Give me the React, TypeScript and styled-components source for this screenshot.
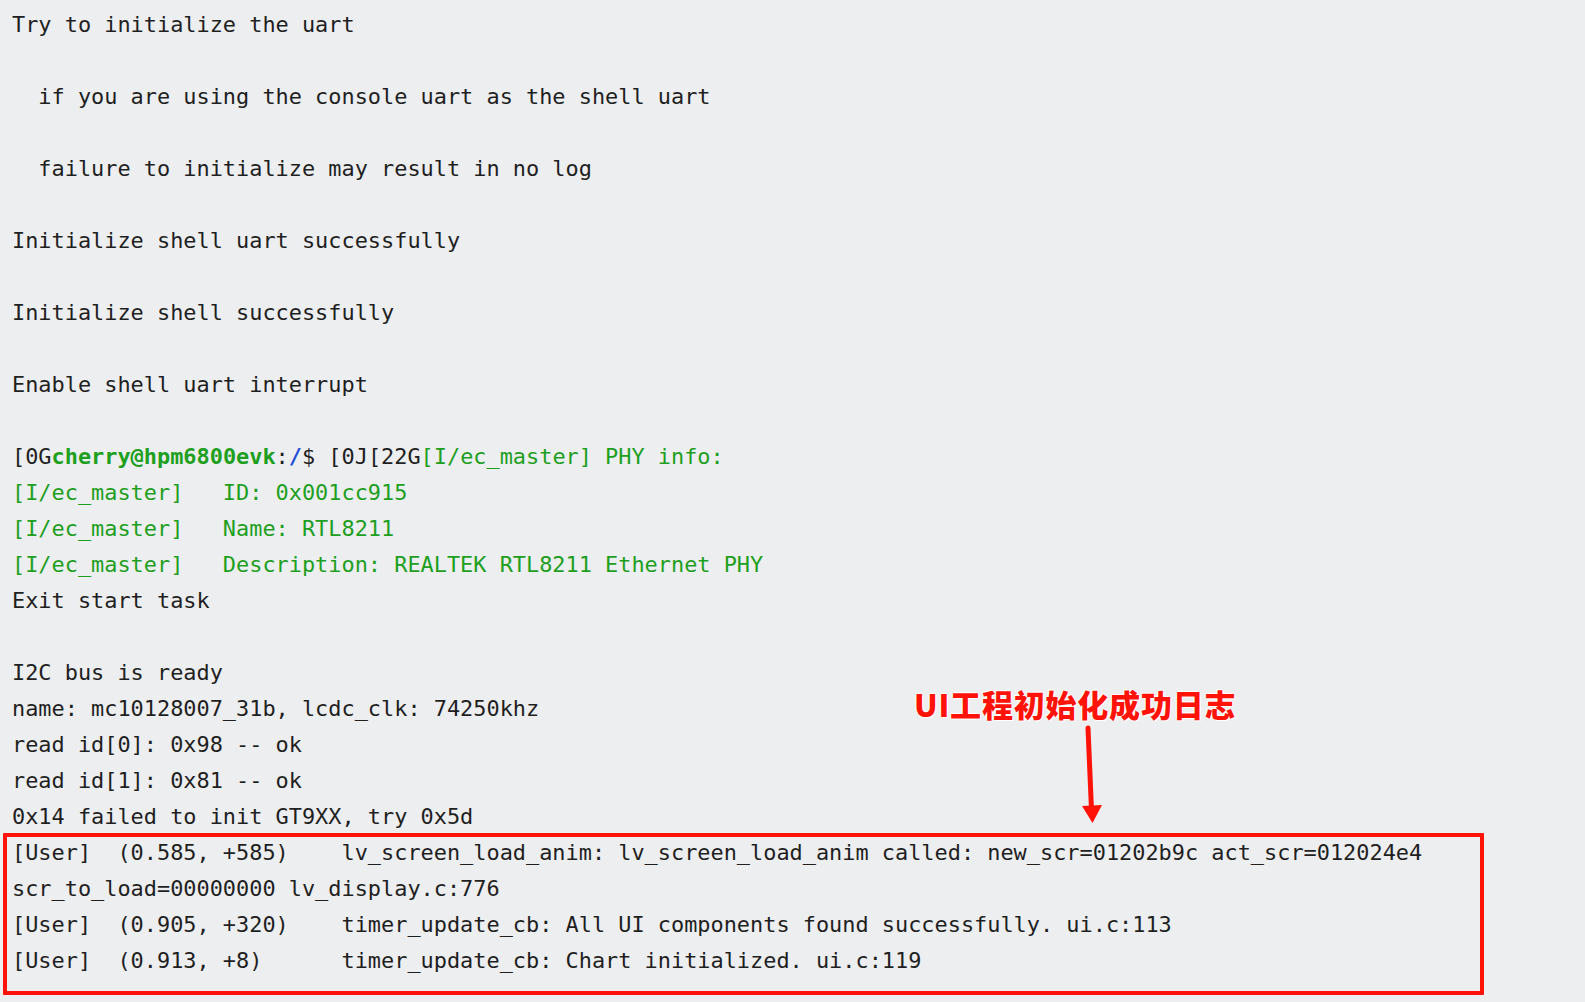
import React from "react";
import styled, { createGlobalStyle } from "styled-components";

const GlobalStyle = createGlobalStyle`
  html, body {
    margin: 0;
    padding: 0;
    background: #edeef0;
  }
  body {
    width: 1585px;
    height: 1002px;
    overflow: hidden;
  }
`;

const Page = styled.div`
  position: relative;
  box-sizing: border-box;
  width: 1585px;
  height: 1002px;
  padding: 7px 0 0 12px;
  background: #edeef0;
  font-family: "DejaVu Sans Mono", "Liberation Mono", monospace;
  font-size: 21.9px;
  color: #1f1f1f;
`;

const Line = styled.div`
  height: 36px;
  line-height: 36px;
  white-space: pre;
`;

const Green = styled.span<{ $bold?: boolean }>`
  color: #1e9f1e;
  font-weight: ${(p) => (p.$bold ? 700 : 400)};
`;

const Blue = styled.span`
  color: #1f4fd8;
  font-weight: 700;
`;

const Highlight = styled.div`
  position: relative;
  &::after {
    content: "";
    position: absolute;
    top: -2px;
    left: -9px;
    width: 1481px;
    height: 162px;
    box-sizing: border-box;
    border: 4.5px solid #ff1208;
    border-radius: 1px;
    pointer-events: none;
  }
`;

const Note = styled.div`
  position: absolute;
  left: 914px;
  top: 684px;
  font-family: "Noto Sans CJK SC", "Noto Sans", sans-serif;
  font-weight: 900;
  font-size: 31px;
  line-height: 40px;
  letter-spacing: 0.8px;
  color: #ff1208;
  white-space: nowrap;
  text-shadow: 0 0 2px #ffffff, 0 0 2px #ffffff, 1px 1px 0 #ffffff,
    -1px -1px 0 #ffffff;
`;

const ArrowSvg = styled.svg`
  position: absolute;
  left: 1076px;
  top: 720px;
`;

const Arrow = () => (
  <ArrowSvg width="30" height="106" viewBox="0 0 30 106">
    <line x1="12" y1="8" x2="15.5" y2="90" stroke="#ff1208" strokeWidth="5" strokeLinecap="round" />
    <polygon points="6,86 26,85 16.5,103" fill="#ff1208" />
  </ArrowSvg>
);

const top: string[] = [
  "Try to initialize the uart",
  "",
  "  if you are using the console uart as the shell uart",
  "",
  "  failure to initialize may result in no log",
  "",
  "Initialize shell uart successfully",
  "",
  "Initialize shell successfully",
  "",
  "Enable shell uart interrupt",
  "",
];

const middle: string[] = [
  "Exit start task",
  "",
  "I2C bus is ready",
  "name: mc10128007_31b, lcdc_clk: 74250khz",
  "read id[0]: 0x98 -- ok",
  "read id[1]: 0x81 -- ok",
  "0x14 failed to init GT9XX, try 0x5d",
];

const boxed: string[] = [
  "[User]  (0.585, +585)    lv_screen_load_anim: lv_screen_load_anim called: new_scr=01202b9c act_scr=012024e4",
  "scr_to_load=00000000 lv_display.c:776",
  "[User]  (0.905, +320)    timer_update_cb: All UI components found successfully. ui.c:113",
  "[User]  (0.913, +8)      timer_update_cb: Chart initialized. ui.c:119",
];

export default function App() {
  return (
    <>
      <GlobalStyle />
      <Page>
        {top.map((t, i) => (
          <Line key={"t" + i}>{t}</Line>
        ))}
        <Line>
          {"[0G"}
          <Green $bold>cherry@hpm6800evk</Green>
          {":"}
          <Blue>/</Blue>
          {"$ [0J[22G"}
          <Green>[I/ec_master] PHY info:</Green>
        </Line>
        <Line>
          <Green>{"[I/ec_master]   ID: 0x001cc915"}</Green>
        </Line>
        <Line>
          <Green>{"[I/ec_master]   Name: RTL8211"}</Green>
        </Line>
        <Line>
          <Green>{"[I/ec_master]   Description: REALTEK RTL8211 Ethernet PHY"}</Green>
        </Line>
        {middle.map((t, i) => (
          <Line key={"m" + i}>{t}</Line>
        ))}
        <Highlight>
          {boxed.map((t, i) => (
            <Line key={"b" + i}>{t}</Line>
          ))}
        </Highlight>
        <Note>UI工程初始化成功日志</Note>
        <Arrow />
      </Page>
    </>
  );
}
